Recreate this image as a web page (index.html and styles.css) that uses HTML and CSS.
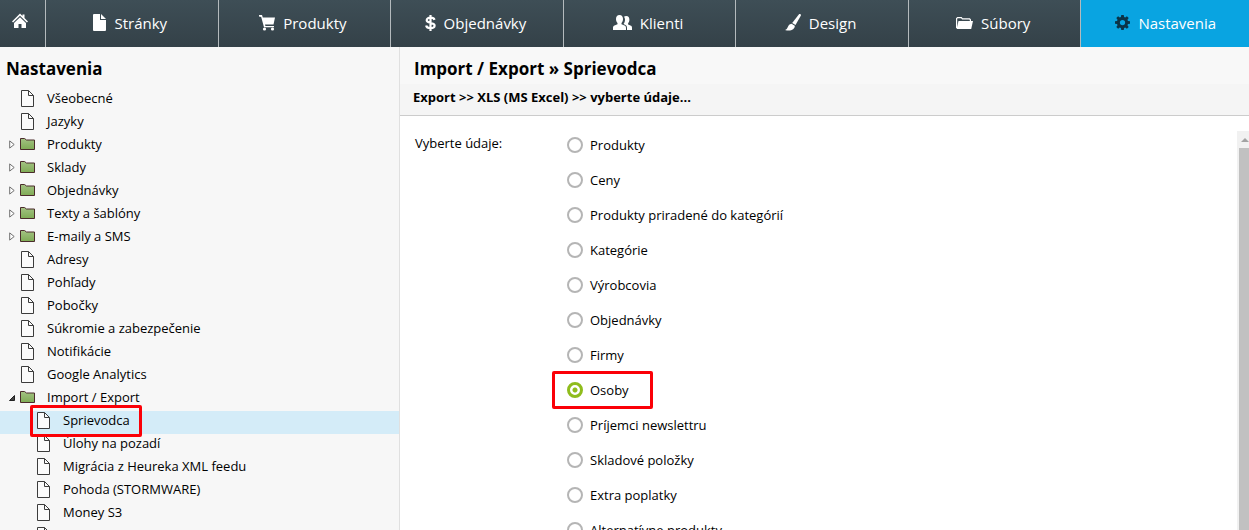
FILE: index.html
```
<!DOCTYPE html>
<html lang="sk">

<head>
  <meta charset="UTF-8">
  <meta name="viewport" content="width=device-width, initial-scale=1.0">
  <title>Nastavenia</title>
  <link rel="stylesheet" href="styles.css">
</head>

<body>
  <!-- icons used more than once -->
  <svg class="sprite" aria-hidden="true">
    <linearGradient id="green" x1="0" y1="0" x2="0" y2="1">
      <stop offset="0" stop-color="#a3c283" />
      <stop offset="1" stop-color="#7fab55" />
    </linearGradient>
    <symbol id="file" viewBox="0 0 13 17">
      <path d="M.5.5h7l5 5v11H.5z" fill="#fbfbfb" stroke="#3c3c3c" />
      <path d="M7.500 .5v5h5" fill="none" stroke="#3c3c3c" />
    </symbol>
    <symbol id="folder" viewBox="0 0 15 12">
      <path d="M.5 .5h4l2 1.500h8v9.500h-14z" fill="url(#green)" stroke="#4a2b2b" />
    </symbol>
    <symbol id="closed" viewBox="0 0 6 9">
      <path d="M.7 .9v7.200l4.500-3.600z" fill="#fff" stroke="#707070" />
    </symbol>
    <symbol id="opened" viewBox="0 0 6 6">
      <path d="M5.500 .5v5h-5z" fill="#444" stroke="#222" />
    </symbol>
  </svg>

  <nav class="nav">
    <a href="#" class="nav__item nav__item--home" aria-label="Domov">
      <svg class="nav__icon" width="16" height="16" viewBox="0 0 16 16">
        <path d="M8 .5 10.500 3V1.500h2V5L16 8.400l-1.100 1.100L8 2.800 1.100 9.500 0 8.400z" />
        <path d="M8 4.200 14 10v5h-4.500v-4h-3v4H2v-5z" />
      </svg>
    </a>
    <a href="#" class="nav__item">
      <svg class="nav__icon" width="13" height="17" viewBox="0 0 13 17">
        <path d="M1 0h6v6h6v10a1 1 0 0 1-1 1H1a1 1 0 0 1-1-1V1a1 1 0 0 1 1-1z" />
        <path d="M8 0 13 5H8z" />
      </svg>
      Stránky
    </a>
    <a href="#" class="nav__item">
      <svg class="nav__icon" width="16" height="16" viewBox="0 0 16 16">
        <path d="M0 0h3l.8 2.500H16L14.500 9.500H6l.4 1.500H15v1.300H5L2.200 2 0 1.500z" />
        <circle cx="5.500" cy="14" r="1.600" />
        <circle cx="13.500" cy="14" r="1.600" />
      </svg>
      Produkty
    </a>
    <a href="#" class="nav__item">
      <svg class="nav__icon" width="11" height="16" viewBox="0 0 11 16">
        <path d="M5.500 0v16M9.500 4.800C9 3.200 7.500 2.700 5.500 2.700 3.200 2.700 1.700 3.700 1.700 5.300c0 3.400 7.900 1.800 7.900 5.300 0 1.700-1.700 2.700-4.100 2.700-2.300 0-4-.8-4.400-2.700" fill="none" stroke="#fff" stroke-width="2.200" />
      </svg>
      Objednávky
    </a>
    <a href="#" class="nav__item">
      <svg class="nav__icon" width="19" height="15" viewBox="0 0 19 15">
        <path d="M6.500 0C9 0 10 1.700 10 4c0 1.800-.6 3-1.500 3.900v1.300l3.600 1.600c.7.400.9 1.200.9 2.400V15H0v-1.800c0-1.200.2-2 .9-2.400l3.600-1.600V7.900C3.600 7 3 5.800 3 4c0-2.300 1-4 3.500-4z" />
        <path d="M11 1.700c.6-.5 1.300-.7 2.200-.7 2.300 0 3.200 1.500 3.200 3.700 0 1.600-.5 2.700-1.300 3.500v1.200l2.900 1.300c.8.400 1 1.200 1 2.300v2h-5v-2c0-1.800-.5-2.600-1.600-3.100l-1.900-.9c1-1.400 1.500-2.700 1.500-4.500 0-1-.4-2-1-2.800z" />
      </svg>
      Klienti
    </a>
    <a href="#" class="nav__item">
      <svg class="nav__icon" width="16" height="17" viewBox="0 0 16 17">
        <path d="M14 .2c1-.5 2.200.2 1.900 1.300L10.500 11 7.200 9z" />
        <path d="m6.500 9.800 3.300 2c.2 3.600-4.300 6-9.800 4.200 3.500-.7 2.200-5.700 6.500-6.200z" />
      </svg>
      Design
    </a>
    <a href="#" class="nav__item">
      <svg class="nav__icon" width="17" height="12" viewBox="0 0 17 12">
        <path d="M.6 11V1.500l1-.9h3.800l1 1.200h7.200l.8 1V4" fill="none" stroke="#fff" stroke-width="1.200" />
        <path d="M2.500 4H17l-1.800 8H.6z" />
      </svg>
      Súbory
    </a>
    <a href="#" class="nav__item nav__item--active">
      <svg class="nav__icon" width="15" height="15" viewBox="0 0 16 16">
        <path fill-rule="evenodd" d="M6.700 0h2.600l.4 2.200 1.200.5L12.700 1.400l1.900 1.900-1.300 1.800.5 1.200 2.200.4v2.600l-2.200.4-.5 1.200 1.300 1.800-1.900 1.900-1.800-1.300-1.200.5-.4 2.200H6.700l-.4-2.200-1.200-.5-1.800 1.300-1.900-1.900 1.300-1.800-.5-1.200L0 9.300V6.700l2.200-.4.500-1.200L1.400 3.300l1.900-1.900 1.800 1.300 1.200-.5zM8 5.200a2.800 2.800 0 1 0 0 5.600 2.800 2.800 0 0 0 0-5.600z" />
      </svg>
      Nastavenia
    </a>
  </nav>

  <div class="layout">
    <aside class="sidebar">
      <h2 class="sidebar__title">Nastavenia</h2>
      <ul class="tree">
        <li><a href="#" class="tree__item"><span class="tree__arrow"></span><svg class="tree__icon tree__icon--file"><use href="#file" /></svg>Všeobecné</a></li>
        <li><a href="#" class="tree__item"><span class="tree__arrow"></span><svg class="tree__icon tree__icon--file"><use href="#file" /></svg>Jazyky</a></li>
        <li><a href="#" class="tree__item"><svg class="tree__arrow"><use href="#closed" /></svg><svg class="tree__icon"><use href="#folder" /></svg>Produkty</a></li>
        <li><a href="#" class="tree__item"><svg class="tree__arrow"><use href="#closed" /></svg><svg class="tree__icon"><use href="#folder" /></svg>Sklady</a></li>
        <li><a href="#" class="tree__item"><svg class="tree__arrow"><use href="#closed" /></svg><svg class="tree__icon"><use href="#folder" /></svg>Objednávky</a></li>
        <li><a href="#" class="tree__item"><svg class="tree__arrow"><use href="#closed" /></svg><svg class="tree__icon"><use href="#folder" /></svg>Texty a šablóny</a></li>
        <li><a href="#" class="tree__item"><svg class="tree__arrow"><use href="#closed" /></svg><svg class="tree__icon"><use href="#folder" /></svg>E-maily a SMS</a></li>
        <li><a href="#" class="tree__item"><span class="tree__arrow"></span><svg class="tree__icon tree__icon--file"><use href="#file" /></svg>Adresy</a></li>
        <li><a href="#" class="tree__item"><span class="tree__arrow"></span><svg class="tree__icon tree__icon--file"><use href="#file" /></svg>Pohľady</a></li>
        <li><a href="#" class="tree__item"><span class="tree__arrow"></span><svg class="tree__icon tree__icon--file"><use href="#file" /></svg>Pobočky</a></li>
        <li><a href="#" class="tree__item"><span class="tree__arrow"></span><svg class="tree__icon tree__icon--file"><use href="#file" /></svg>Súkromie a zabezpečenie</a></li>
        <li><a href="#" class="tree__item"><span class="tree__arrow"></span><svg class="tree__icon tree__icon--file"><use href="#file" /></svg>Notifikácie</a></li>
        <li><a href="#" class="tree__item"><span class="tree__arrow"></span><svg class="tree__icon tree__icon--file"><use href="#file" /></svg>Google Analytics</a></li>
        <li>
          <a href="#" class="tree__item"><svg class="tree__arrow tree__arrow--open"><use href="#opened" /></svg><svg class="tree__icon"><use href="#folder" /></svg>Import / Export</a>
          <ul class="tree tree--sub">
            <li><a href="#" class="tree__item tree__item--active"><span class="marked"><svg class="tree__icon tree__icon--file"><use href="#file" /></svg>Sprievodca</span></a></li>
            <li><a href="#" class="tree__item"><svg class="tree__icon tree__icon--file"><use href="#file" /></svg>Úlohy na pozadí</a></li>
            <li><a href="#" class="tree__item"><svg class="tree__icon tree__icon--file"><use href="#file" /></svg>Migrácia z Heureka XML feedu</a></li>
            <li><a href="#" class="tree__item"><svg class="tree__icon tree__icon--file"><use href="#file" /></svg>Pohoda (STORMWARE)</a></li>
            <li><a href="#" class="tree__item"><svg class="tree__icon tree__icon--file"><use href="#file" /></svg>Money S3</a></li>
            <li><a href="#" class="tree__item"><svg class="tree__icon tree__icon--file"><use href="#file" /></svg></a></li>
          </ul>
        </li>
      </ul>
    </aside>

    <main class="content">
      <h1 class="content__title">Import / Export » Sprievodca</h1>
      <h2 class="content__path">Export &gt;&gt; XLS (MS Excel) &gt;&gt; vyberte údaje...</h2>
      <div class="content__body">
        <form class="form">
          <span class="form__label" id="data-label">Vyberte údaje:</span>
          <div class="form__options" role="radiogroup" aria-labelledby="data-label">
            <label class="radio"><input type="radio" name="data">Produkty</label>
            <label class="radio"><input type="radio" name="data">Ceny</label>
            <label class="radio"><input type="radio" name="data">Produkty priradené do kategórií</label>
            <label class="radio"><input type="radio" name="data">Kategórie</label>
            <label class="radio"><input type="radio" name="data">Výrobcovia</label>
            <label class="radio"><input type="radio" name="data">Objednávky</label>
            <label class="radio"><input type="radio" name="data">Firmy</label>
            <label class="radio marked"><input type="radio" name="data" checked>Osoby</label>
            <label class="radio"><input type="radio" name="data">Príjemci newslettru</label>
            <label class="radio"><input type="radio" name="data">Skladové položky</label>
            <label class="radio"><input type="radio" name="data">Extra poplatky</label>
            <label class="radio"><input type="radio" name="data">Alternatívne produkty</label>
          </div>
        </form>
        <div class="scrollbar">
          <svg class="scrollbar__up" width="8" height="4" viewBox="0 0 8 4"><path d="M0 4 4 0l4 4z" fill="#a3a3a3" /></svg>
          <div class="scrollbar__thumb"></div>
        </div>
      </div>
    </main>
  </div>
</body>

</html>
```
FILE: styles.css
```
* {
  margin: 0;
  padding: 0;
  box-sizing: border-box;
}

body {
  display: flex;
  flex-direction: column;
  height: 100vh;
  overflow: hidden;
  background: #fff;
  color: #000;
  font-family: "Open Sans", "Noto Sans", sans-serif;
  font-size: 13px;
  line-height: 20px;
}

a {
  color: inherit;
  text-decoration: none;
}

.sprite {
  position: absolute;
  width: 0;
  height: 0;
}

/* ============= top menu ============= */
.nav {
  display: flex;
  flex: none;
  height: 47px;
  margin-right: -5px;
  background: linear-gradient(to bottom, #3e4e56, #344148);
}

.nav__item {
  display: flex;
  flex: 1;
  justify-content: center;
  align-items: center;
  gap: 8px;
  padding: 0 3px 2px 0;
  border-right: 1px solid #b4babd;
  color: #fff;
  font-size: 15px;
}

.nav__item--home {
  flex: none;
  width: 46px;
  padding: 0 6px 6px 0;
}

.nav__item--active {
  border-color: #09a4e1;
  background: #09a4e1;
}

.nav__icon {
  fill: #fff;
}

.nav__item--active .nav__icon {
  fill: #0b3347;
}

.layout {
  display: flex;
  flex: 1;
  min-height: 0;
}

/* ============= left tree ============= */
.sidebar {
  flex: none;
  width: 400px;
  overflow: hidden;
  border-right: 1px solid #e0e0e0;
  background: #f7f7f7;
}

.sidebar__title {
  padding: 12px 6px 10px;
  font-size: 17px;
  line-height: 20px;
}

.tree {
  list-style: none;
}

.tree__item {
  display: flex;
  align-items: center;
  height: 23px;
  padding: 0 0 6px 9px;
}

.tree--sub .tree__item {
  padding-left: 36px;
}

.tree__item--active {
  background: #d4ecf8;
}

.tree__arrow {
  width: 6px;
  height: 9px;
  margin: 2px 5px 0 0;
}

.tree__arrow--open {
  height: 6px;
}

.tree__icon {
  width: 15px;
  height: 12px;
  margin: 1px 12px 0 0;
}

.tree__icon--file {
  width: 13px;
  height: 17px;
  margin: 2px 13px 0 1px;
}

/* ============= red frame ============= */
.marked {
  position: relative;
  display: flex;
  align-items: center;
}

.marked::after {
  content: "";
  position: absolute;
  z-index: 1;
  inset: -5px -12px -7px -6px;
  border: 3px solid #fb0007;
  border-radius: 2px;
}

.radio.marked::after {
  inset: -9px -24px -9px -15px;
}

/* ============= content ============= */
.content {
  display: flex;
  flex: 1;
  flex-direction: column;
  min-width: 0;
}

.content__title {
  padding: 12px 14px 5px;
  background: #f8f8f8;
  font-size: 17px;
  line-height: 20px;
}

.content__path {
  padding: 3px 13px 8px;
  border-bottom: 1px solid #ccc;
  background: #f5f5f5;
  font-size: 13px;
}

.content__body {
  display: flex;
  flex: 1;
  min-height: 0;
  padding-top: 15px;
}

.form {
  display: flex;
  flex: 1;
  align-items: flex-start;
  overflow: hidden;
  padding-left: 15px;
}

.form__label {
  width: 152px;
  padding-top: 2px;
}

.form__options {
  display: flex;
  flex-direction: column;
  align-items: flex-start;
  gap: 15px;
  padding-top: 4px;
}

.radio {
  display: flex;
  align-items: center;
}

.radio input {
  appearance: none;
  width: 16px;
  height: 16px;
  margin-right: 7px;
  border: 2px solid #b5b5b5;
  border-radius: 50%;
  background: #fff;
}

.radio input:checked {
  border: 3px solid #8fbc1c;
  background: radial-gradient(circle, #8fbc1c 2px, #fff 3px);
}

.scrollbar {
  flex: none;
  width: 12px;
  display: flex;
  flex-direction: column;
  align-items: flex-end;
  background: #f1f1f1;
}

.scrollbar__up {
  margin: 7px 0 6px;
}

.scrollbar__thumb {
  flex: 1;
  width: 10px;
  background: #c1c1c1;
}
```
